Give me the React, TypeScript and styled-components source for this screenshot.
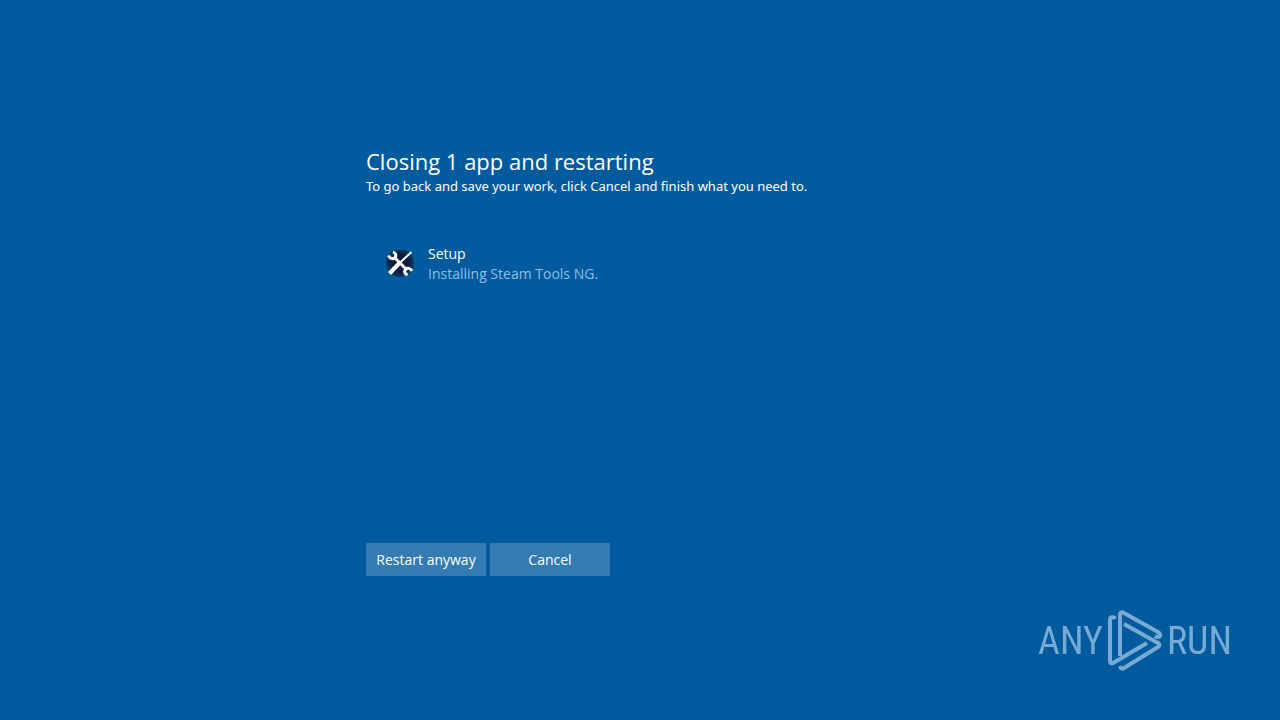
import React from "react";
import styled, { createGlobalStyle } from "styled-components";

const GlobalStyle = createGlobalStyle`
  * { box-sizing: border-box; }
  body {
    margin: 0;
    background: #005a9e;
    color: #fff;
    font-family: "Segoe UI", "Open Sans", "Noto Sans", sans-serif;
  }
`;

const Screen = styled.div`
  min-height: 100vh;
  display: flex;
  flex-direction: column;
  align-items: center;
  padding: 144px 24px 48px;
`;

const Content = styled.main`
  width: 100%;
  max-width: 548px;
`;

const Title = styled.h1`
  margin: 0;
  font-size: 22px;
  line-height: 34px;
  font-weight: 400;
`;

const Hint = styled.p`
  margin: 0;
  font-family: "Segoe UI", "Noto Sans", sans-serif;
  font-size: 13px;
  line-height: 16px;
`;

const AppList = styled.ul`
  list-style: none;
  margin: 0;
  padding: 50px 20px 0;
  min-height: 349px;
`;

const AppItem = styled.li`
  display: flex;
  align-items: center;
  gap: 14px;
`;

const AppIcon = styled.svg`
  width: 28px;
  height: 28px;
  flex: none;
`;

const AppText = styled.div`
  font-size: 14px;
  line-height: 20px;
`;

const AppStatus = styled.div`
  color: #8fbfe6;
`;

const Actions = styled.div`
  display: flex;
  gap: 4px;
`;

const ActionButton = styled.button`
  width: 120px;
  height: 33px;
  padding: 0;
  border: 0;
  background: #337bb1;
  color: #fff;
  font: inherit;
  font-size: 14px;
  line-height: 20px;
`;

const Watermark = styled.div`
  position: fixed;
  right: 48px;
  bottom: 48px;
  display: flex;
  align-items: center;
  gap: 4px;
  color: #78abd4;
  font-family: "Roboto Condensed", "Liberation Sans Narrow", sans-serif;
  font-weight: 400;
  font-size: 38px;
  line-height: 62px;
`;

const PlayMark = styled.svg`
  width: 56px;
  height: 62px;
`;

export default function App() {
  return (
    <>
      <GlobalStyle />
      <Screen>
        <Content>
          <Title>Closing 1 app and restarting</Title>
          <Hint>To go back and save your work, click Cancel and finish what you need to.</Hint>
          <AppList>
            <AppItem>
              <AppIcon viewBox="0 0 28 28" aria-hidden="true">
                <defs>
                  <radialGradient id="disc">
                    <stop offset="0.6" stopColor="#0b1c3c" />
                    <stop offset="1" stopColor="#0d3a64" />
                  </radialGradient>
                </defs>
                <circle cx="14" cy="13" r="14" fill="url(#disc)" />
                <g fill="none" stroke="#fff" strokeLinecap="butt">
                  <path d="M8 7 21 20" strokeWidth="3" />
                  <path d="M2.500 5.500C4 9 7.500 9.500 9 7.500S10 3.500 7 1.800" strokeWidth="3" />
                  <path d="M26 21C24.500 18 21 17.500 19.500 19.500S18.500 23.500 21.500 25" strokeWidth="3" />
                  <path d="M25.500 2 13 13.500" strokeWidth="2" />
                  <path d="M13 13.500 3.500 23.500" strokeWidth="4" />
                </g>
              </AppIcon>
              <AppText>
                <div>Setup</div>
                <AppStatus>Installing Steam Tools NG.</AppStatus>
              </AppText>
            </AppItem>
          </AppList>
          <Actions>
            <ActionButton type="button">Restart anyway</ActionButton>
            <ActionButton type="button">Cancel</ActionButton>
          </Actions>
        </Content>
      </Screen>
      <Watermark>
        <span>ANY</span>
        <PlayMark viewBox="0 0 56 62" aria-hidden="true">
          <g fill="none" stroke="currentColor" strokeWidth="4" strokeLinejoin="round">
            <path d="M8 9C7 6 3 7 3 10V51Q3 54 6 53L40 33" />
            <path d="M13 46V5Q13 1 17 3L51 22Q54 24 53 26 51 28 48 26" />
            <path d="M17 14 51 33Q54 35 51 37L17 58Q14 60 13 56" />
          </g>
        </PlayMark>
        <span>RUN</span>
      </Watermark>
    </>
  );
}
